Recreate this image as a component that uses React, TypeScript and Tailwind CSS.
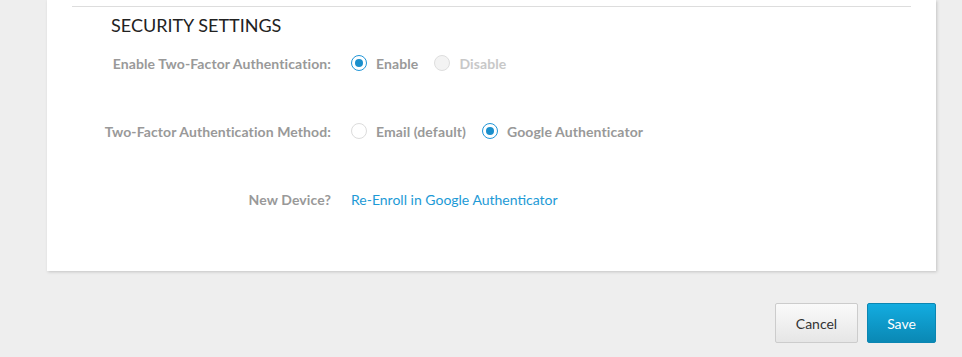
function Radio({ checked, disabled }: { checked?: boolean; disabled?: boolean }) {
  return (
    <span
      className={
        "flex h-[16px] w-[16px] shrink-0 items-center justify-center rounded-full border " +
        (checked
          ? "border-[#2196d8] bg-white"
          : disabled
            ? "border-[#dedede] bg-[#f3f3f3]"
            : "border-[#dcdcdc] bg-white")
      }
    >
      {checked && <span className="h-[8px] w-[8px] rounded-full bg-[#1a8fcc]" />}
    </span>
  );
}

function Option({ label, checked, disabled }: { label: string; checked?: boolean; disabled?: boolean }) {
  return (
    <label className="flex items-center gap-[9px]">
      <Radio checked={checked} disabled={disabled} />
      <span className={"font-bold tracking-[0.1px] " + (disabled ? "text-[#c8c8c8]" : "text-[#999999]")}>{label}</span>
    </label>
  );
}

function Row({ label, children }: { label: string; children: React.ReactNode }) {
  return (
    <div className="flex h-[20px] items-center">
      <div className="w-[259px] text-right font-bold tracking-[0.1px] text-[#999999]">{label}</div>
      <div className="ml-[20px] flex items-center gap-[16px]">{children}</div>
    </div>
  );
}

export default function App() {
  return (
    <div className="h-[357px] w-full overflow-hidden bg-[#eeeeee] font-['Lato',sans-serif] text-[14px]">
      <div className="ml-[47px] h-[271px] w-[889px] bg-white px-[25px] pt-[6px] shadow-[1px_1px_3px_rgba(0,0,0,0.18)]">
        <div className="border-t border-[#dddddd] pl-[39px] pt-[7px]">
          <h2 className="text-[18px] leading-[22px] text-[#222222]">SECURITY SETTINGS</h2>
        </div>
        <div className="mt-[17px] flex flex-col gap-[48px]">
          <Row label="Enable Two-Factor Authentication:">
            <Option label="Enable" checked />
            <Option label="Disable" disabled />
          </Row>
          <Row label="Two-Factor Authentication Method:">
            <Option label="Email (default)" />
            <Option label="Google Authenticator" checked />
          </Row>
          <Row label="New Device?">
            <a href="#" className="text-[#1d9ad6]">
              Re-Enroll in Google Authenticator
            </a>
          </Row>
        </div>
      </div>
      <div className="mr-[26px] mt-[32px] flex justify-end gap-[9px]">
        <button className="h-[40px] w-[83px] rounded-[2px] border border-[#cccccc] bg-gradient-to-b from-[#fafafa] to-[#e6e6e6] text-[#333333]">
          Cancel
        </button>
        <button className="h-[40px] w-[69px] rounded-[2px] border border-[#0b86b2] bg-gradient-to-b from-[#13ace0] to-[#0a88b4] text-white">
          Save
        </button>
      </div>
    </div>
  );
}
